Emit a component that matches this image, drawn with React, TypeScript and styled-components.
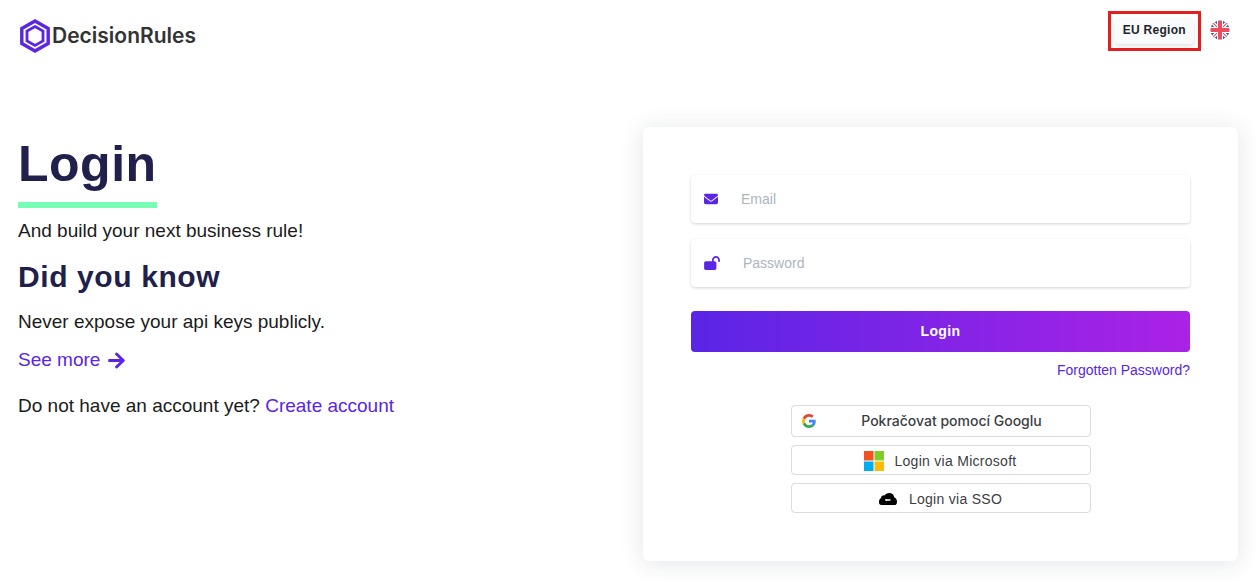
import React from 'react';
import styled, { createGlobalStyle } from 'styled-components';
import { FaArrowRight } from 'react-icons/fa';
import { FaEnvelope, FaLockOpen } from 'react-icons/fa6';

const violet = '#5a25e6';
const navy = '#211f4c';

const GlobalStyle = createGlobalStyle`
  *, *::before, *::after { box-sizing: border-box; }
  body {
    margin: 0;
    background: #fff;
    color: #1b1b1b;
    font-family: 'Liberation Sans', Arial, sans-serif;
    font-size: 14px;
  }
  h1, h2, p { margin: 0; }
  a { color: ${violet}; text-decoration: none; }
  button, input { font: inherit; }
  button { cursor: pointer; }
`;

const Page = styled.div`
  display: flex;
  flex-direction: column;
`;

const Header = styled.header`
  display: flex;
  justify-content: space-between;
  align-items: flex-start;
  padding: 11px 27px 0 20px;
`;

const Brand = styled.a`
  display: flex;
  align-items: center;
  gap: 1px;
  padding-top: 7px;
  color: #333;
  font: 600 21px/36px Inter, sans-serif;
`;

const HeaderTools = styled.div`
  display: flex;
  align-items: flex-start;
  gap: 9px;
`;

const RegionFrame = styled.div`
  padding: 4px;
  border: 3px solid #e31e1e;
`;

const RegionButton = styled.button`
  display: block;
  padding: 0 8px 2px;
  border: 0;
  border-radius: 4px;
  background: #f8fafc;
  box-shadow: 0 2px 4px rgba(0, 0, 0, 0.12);
  color: #212529;
  font-size: 12px;
  font-weight: 700;
  line-height: 24px;
  letter-spacing: 0.025em;
`;

const LanguageButton = styled.button`
  display: flex;
  margin-top: 9px;
  padding: 0;
  border: 0;
  background: none;
`;

const Main = styled.main`
  display: grid;
  grid-template-columns: 1fr 1fr;
  align-items: start;
  gap: 30px;
  padding: 73px 19px 20px 18px;
`;

const Intro = styled.section`
  display: flex;
  flex-direction: column;
  align-items: flex-start;
  padding-top: 4px;
  font-size: 19px;
  line-height: 28px;
`;

const Title = styled.h1`
  padding-bottom: 4px;
  border-bottom: 6px solid #76ffb4;
  color: ${navy};
  font-size: 50px;
  line-height: 67px;
  letter-spacing: 0.01em;
`;

const Subtitle = styled.h2`
  margin: 14px 0 13px;
  color: ${navy};
  font-size: 30px;
  line-height: 36px;
  letter-spacing: 0.02em;
`;

const Tagline = styled.p`
  margin-top: 9px;
`;

const MoreLink = styled.a`
  display: flex;
  align-items: center;
  gap: 7px;
  margin: 10px 0 18px;
`;

const Card = styled.section`
  display: flex;
  flex-direction: column;
  padding: 48px;
  border-radius: 6px;
  background: #fff;
  box-shadow: 0 2px 24px rgba(33, 50, 60, 0.13);
`;

const LoginForm = styled.form`
  display: flex;
  flex-direction: column;
`;

const Field = styled.label`
  display: flex;
  align-items: center;
  gap: 23px;
  height: 48px;
  margin-bottom: 16px;
  padding: 0 13px;
  border-radius: 4px;
  box-shadow: 0 1px 3px rgba(0, 0, 0, 0.18);
  color: ${violet};
`;

const EnvelopeIcon = styled(FaEnvelope)`
  width: 14px;
  height: 14px;
`;

const LockIcon = styled(FaLockOpen)`
  width: 16px;
  height: 14px;
`;

const FieldInput = styled.input`
  flex: 1;
  min-width: 0;
  padding: 0;
  border: 0;
  outline: 0;
  background: none;
  color: #1b1b1b;

  &::placeholder { color: #adb5bd; }
`;

const SubmitButton = styled.button`
  height: 41px;
  margin-top: 8px;
  padding: 0 0 2px;
  border: 0;
  border-radius: 4px;
  background: linear-gradient(90deg, #5a25e6, #ab22e6);
  color: #fff;
  font-weight: 700;
  letter-spacing: 0.025em;
`;

const ForgottenLink = styled.a`
  align-self: flex-end;
  margin-top: 8px;
  line-height: 20px;
`;

const Providers = styled.div`
  display: flex;
  flex-direction: column;
  align-self: center;
  gap: 8px;
  width: 300px;
  max-width: 100%;
  margin-top: 25px;
`;

const ProviderButton = styled.button<{ $gap: number }>`
  display: flex;
  align-items: center;
  justify-content: center;
  gap: ${({ $gap }) => $gap}px;
  height: 30px;
  padding: 2px 10px 0;
  border: 1px solid #dadce0;
  border-radius: 4px;
  background: #fff;
  color: #3c4043;
  letter-spacing: 0.02em;
`;

const GoogleButton = styled(ProviderButton)`
  height: 32px;
  padding: 0 10px;
  font-family: Inter, sans-serif;
  font-weight: 500;
  letter-spacing: normal;
`;

const GoogleLabel = styled.span`
  flex: 1;
  padding-bottom: 1px;
`;

function BrandMark() {
  return (
    <svg width="31" height="34" viewBox="0 0 31 34" fill="none" stroke={violet} aria-hidden="true">
      <path d="M15 2 28.200 9.600V24.400L15 32 1.800 24.400V9.600Z" strokeWidth="3.400" />
      <path d="M15 7.500 23 12.100V21.900L15 26.500 7 21.900V12.100Z" strokeWidth="2.800" />
    </svg>
  );
}

function BritishFlag() {
  return (
    <svg width="20" height="20" viewBox="0 0 20 20" aria-hidden="true">
      <clipPath id="flag-disc"><circle cx="10" cy="10" r="9.500" /></clipPath>
      <g clipPath="url(#flag-disc)">
        <path d="M0 0H20V20H0Z" fill="#2e5aa0" />
        <path d="M0 0 20 20M20 0 0 20" stroke="#fff" strokeWidth="3.800" />
        <path d="M0 0 20 20M20 0 0 20" stroke="#ed4c5c" strokeWidth="1.200" />
        <path d="M10 0V20M0 10H20" stroke="#fff" strokeWidth="6" />
        <path d="M10 0V20M0 10H20" stroke="#ed4c5c" strokeWidth="4" />
      </g>
    </svg>
  );
}

function GoogleMark() {
  return (
    <svg width="14" height="14" viewBox="0 0 48 48" aria-hidden="true">
      <path fill="#EA4335" d="M24 9.500c3.540 0 6.710 1.220 9.210 3.600l6.850-6.850C35.900 2.380 30.470 0 24 0 14.620 0 6.510 5.380 2.560 13.220l7.980 6.190C12.430 13.720 17.740 9.500 24 9.500z" />
      <path fill="#4285F4" d="M46.980 24.550c0-1.570-.15-3.090-.38-4.550H24v9.020h12.940c-.58 2.960-2.260 5.480-4.780 7.180l7.730 6c4.510-4.180 7.090-10.360 7.090-17.650z" />
      <path fill="#FBBC05" d="M10.530 28.590c-.48-1.450-.76-2.990-.76-4.590s.27-3.140.76-4.590l-7.980-6.190C.92 16.460 0 20.120 0 24c0 3.880.92 7.540 2.560 10.780l7.970-6.190z" />
      <path fill="#34A853" d="M24 48c6.480 0 11.930-2.130 15.890-5.810l-7.730-6c-2.150 1.450-4.920 2.300-8.160 2.300-6.260 0-11.570-4.220-13.470-9.910l-7.980 6.190C6.510 42.620 14.620 48 24 48z" />
    </svg>
  );
}

function MicrosoftMark() {
  return (
    <svg width="20" height="20" viewBox="0 0 20 20" aria-hidden="true">
      <path fill="#f4511e" d="M0 0H9.500V9.500H0Z" />
      <path fill="#80cc28" d="M10.500 0H20V9.500H10.500Z" />
      <path fill="#00adef" d="M0 10.500H9.500V20H0Z" />
      <path fill="#fbbc09" d="M10.500 10.500H20V20H10.500Z" />
    </svg>
  );
}

function SsoMark() {
  return (
    <svg width="18" height="12" viewBox="0 0 18 12" aria-hidden="true">
      <path d="M2.500 12C.8 12 0 10.900 0 9.200 0 7.300.6 5.700 2 5.100 2.300 3.200 3.600 2.200 5.500 2.400 6.500.9 8.100 0 10.200 0 12.900 0 14.900 1.600 15.200 4.200 17 4.900 18 6.600 18 8.900 18 10.900 17.100 12 15.300 12Z" />
      <path d="M6.500 7H11.500M7 6V8" stroke="#fff" strokeWidth="1.300" />
    </svg>
  );
}

export default function App() {
  return (
    <Page>
      <GlobalStyle />
      <Header>
        <Brand href="#"><BrandMark />DecisionRules</Brand>
        <HeaderTools>
          <RegionFrame><RegionButton type="button">EU Region</RegionButton></RegionFrame>
          <LanguageButton type="button" aria-label="English"><BritishFlag /></LanguageButton>
        </HeaderTools>
      </Header>
      <Main>
        <Intro>
          <Title>Login</Title>
          <Tagline>And build your next business rule!</Tagline>
          <Subtitle>Did you know</Subtitle>
          <p>Never expose your api keys publicly.</p>
          <MoreLink href="#">See more <FaArrowRight size={19} /></MoreLink>
          <p>Do not have an account yet? <a href="#">Create account</a></p>
        </Intro>
        <Card>
          <LoginForm onSubmit={(event) => event.preventDefault()}>
            <Field><EnvelopeIcon /><FieldInput type="email" placeholder="Email" aria-label="Email" /></Field>
            <Field><LockIcon /><FieldInput type="password" placeholder="Password" aria-label="Password" /></Field>
            <SubmitButton type="submit">Login</SubmitButton>
            <ForgottenLink href="#">Forgotten Password?</ForgottenLink>
          </LoginForm>
          <Providers>
            <GoogleButton type="button" $gap={8}><GoogleMark /><GoogleLabel>Pokračovat pomocí Googlu</GoogleLabel></GoogleButton>
            <ProviderButton type="button" $gap={10}><MicrosoftMark />Login via Microsoft</ProviderButton>
            <ProviderButton type="button" $gap={12}><SsoMark />Login via SSO</ProviderButton>
          </Providers>
        </Card>
      </Main>
    </Page>
  );
}
